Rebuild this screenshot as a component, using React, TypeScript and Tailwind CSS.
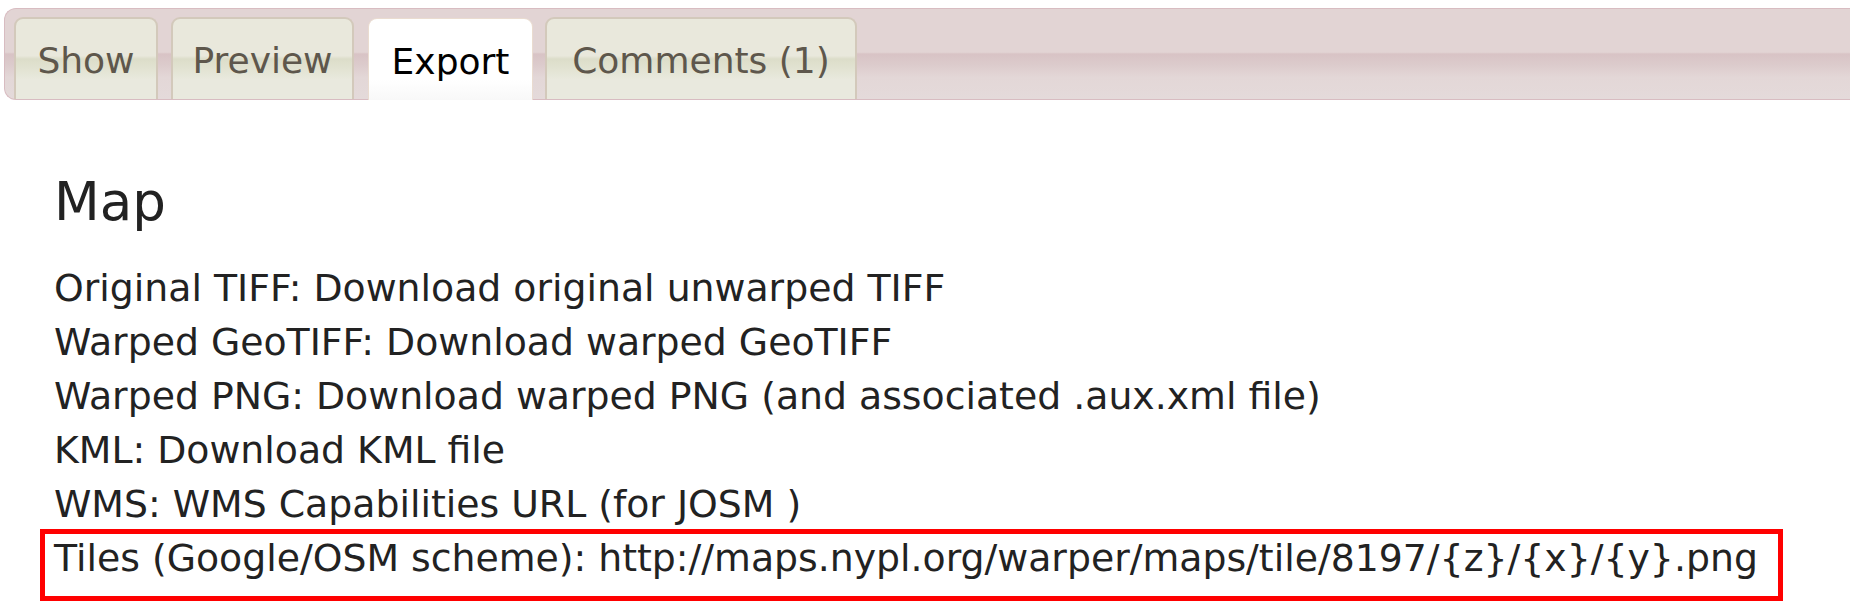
export default function App() {
  const tabs = [
    { label: "Show", active: false, width: "w-[144px]", gap: "ml-0" },
    { label: "Preview", active: false, width: "w-[183px]", gap: "ml-[13px]" },
    { label: "Export", active: true, width: "w-[165px]", gap: "ml-[14px]" },
    { label: "Comments (1)", active: false, width: "w-[312px]", gap: "ml-[12px]" },
  ];

  const lines = [
    "Original TIFF: Download original unwarped TIFF",
    "Warped GeoTIFF: Download warped GeoTIFF",
    "Warped PNG: Download warped PNG (and associated .aux.xml file)",
    "KML: Download KML file",
    "WMS: WMS Capabilities URL (for JOSM )",
  ];

  return (
    <div
      className="w-[1850px] h-[603px] overflow-hidden bg-white"
      style={{ fontFamily: '"DejaVu Sans", Verdana, sans-serif' }}
    >
      {/* tab strip */}
      <div className="pt-[8px] pl-[4px]">
        <div className="h-[92px] flex items-end pl-[9px] border border-r-0 border-[#d8bcc1] rounded-l-[12px] bg-[linear-gradient(to_bottom,#e2d4d4_0%,#e2d4d4_48%,#d8c3c5_50%,#dccbcc_62%,#e3d7d7_76%,#e4dada_100%)]">
          {tabs.map((tab) =>
            tab.active ? (
              <div
                key={tab.label}
                className={`${tab.width} ${tab.gap} h-[82px] pt-[4px] flex items-center justify-center rounded-t-[9px] border border-b-0 border-[#eadcd0] bg-[linear-gradient(to_bottom,#ffffff_0%,#ffffff_75%,#f8f8f8_100%)] text-[36px] text-black -mb-px`}
              >
                {tab.label}
              </div>
            ) : (
              <div
                key={tab.label}
                className={`${tab.width} ${tab.gap} h-[82px] pt-[4px] flex items-center justify-center rounded-t-[9px] border-2 border-b-0 border-[#d3c9bb] bg-[linear-gradient(to_bottom,#e9e8dc_0%,#e9e8dc_46%,#dcddc9_50%,#e2e3d2_62%,#e9e9de_76%,#e9e9de_100%)] text-[36px] text-[#5e574c]`}
              >
                {tab.label}
              </div>
            ),
          )}
        </div>
      </div>

      {/* export content */}
      <div className="pl-[40px] text-[#222222]">
        <h1 className="pl-[14px] mt-[72px] text-[53px] leading-[60px] font-normal">
          Map
        </h1>
        <div className="mt-[29px] text-[37.8px] leading-[54px]">
          {lines.map((line) => (
            <div key={line} className="pl-[14px]">
              {line}
            </div>
          ))}
          <div className="-mt-[2px] w-[1743px] border-[5px] border-[#ff0000] pl-[9px] pb-[14px] leading-[48px]">
            Tiles (Google/OSM scheme): http://maps.nypl.org/warper/maps/tile/8197/{"{z}"}/{"{x}"}/{"{y}"}.png
          </div>
        </div>
      </div>
    </div>
  );
}
